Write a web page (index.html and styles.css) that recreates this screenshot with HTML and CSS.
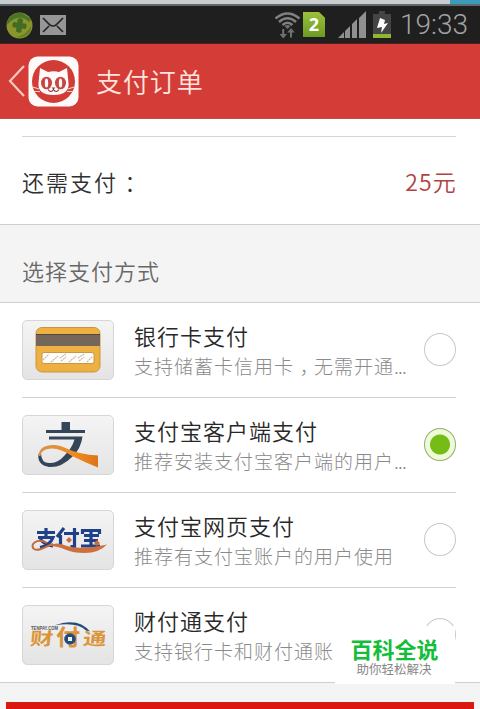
FILE: index.html
```html
<!DOCTYPE html>
<html lang="zh-CN">
<head>
<meta charset="utf-8">
<title>支付订单</title>
<link rel="stylesheet" href="styles.css">
</head>
<body>
<div class="top-strip"><span class="strip-accent"></span></div>
<div class="status-bar">
  <svg class="shield" width="27" height="27" viewBox="0 0 27 27"><circle cx="13.500" cy="13.500" r="13" fill="#8b942c"/><path d="M1 13C1 5 9 0 16 1L25 7l-2 3C17 3 7 5 1 13" fill="#4a7428"/><path d="M25 14c1 8-8 13-15 11 7-1 12-5 15-11" fill="#5a8029"/><path d="M10.500 6.500q3-2 6 0v4h4q2 3 0 6h-4v4q-3 2-6 0v-4h-4q-2-3 0-6h4z" fill="#416c22" transform="rotate(8 13.500 13.500) translate(1.350 1.350) scale(.9)"/></svg>
  <svg class="mail" width="26" height="20" viewBox="0 0 26 20"><path d="M0 0h26v20H0z" fill="#969696"/><path d="M3 3l7 7q3 2 6 0l7-7M3 17l6-6M23 17l-6-6" fill="none" stroke="#262626" stroke-width="1.700"/></svg>
  <span class="spacer"></span>
  <svg class="wifi" width="27" height="28" viewBox="0 0 27 28"><g fill="none" stroke="#808080" stroke-width="2.400"><path d="M1.500 7.500Q13.500-2.500 25.500 7.500M5 11Q13.500 3.500 22 11M8.500 14Q13.500 9.500 18.500 14"/></g><path d="M10.500 15q3-2 6 0l-3 3zM8.200 18h2v5H13l-3.700 4.500L5.500 23h2.700zM16 26.500h2v-5h2.800L17 17l-3.700 4.500H16z" fill="#707070"/></svg>
  <span class="sim">2</span>
  <svg class="signal" width="29" height="28" viewBox="0 0 29 28"><path d="M0 27L6 21v6zM7 20l5-5v12H7zM14 13l5-5v19h-5zM21 7l7-7v27h-7z" fill="#909090"/></svg>
  <svg class="battery" width="18" height="28" viewBox="0 0 18 28"><path d="M6 0h6v3h6v20H0V3h6z" fill="#444"/><path d="M0 23h18v4H0z" fill="#8fb82e"/><path d="M7 7l5 2-1 4 4-1-7 10 1-6-5 1z" fill="#fff"/></svg>
  <span class="clock">19:33</span>
</div>
<header class="title-bar">
  <svg class="back" width="18" height="34" viewBox="0 0 18 34"><path d="M16 2L2 17l14 15" fill="none" stroke="#f6c9c1" stroke-width="2.200"/></svg>
  <svg class="logo" width="51" height="51" viewBox="0 0 51 51"><rect x=".5" y=".5" width="50" height="50" rx="9" fill="#fffafa"/><circle cx="25.500" cy="25.500" r="21.500" fill="#d23c36"/><path d="M12 12l8 4q6-1.500 11 0l8-4 1.500 15q1 12-15 12T10.500 27z" fill="#fffafa"/><ellipse cx="18.500" cy="27" rx="5.500" ry="6.300" fill="#c84440"/><ellipse cx="32.500" cy="27" rx="5.500" ry="6.300" fill="#c84440"/><ellipse cx="18.500" cy="27" rx="1.700" ry="4.500" fill="#fffafa"/><ellipse cx="32.500" cy="27" rx="1.700" ry="4.500" fill="#fffafa"/><path d="M23.500 31.500h4l-2 2z" fill="#81383a"/><path d="M20 33.500q3 4 5.500 0 2.500 4 5.500 0" fill="none" stroke="#81383a" stroke-width="1.200"/><path d="M5 31l6 2M6 35.500h6M46 31l-6 2M45 35.500h-6" stroke="#f3cdc8" stroke-width="1.100"/></svg>
  <h1>支付订单</h1>
</header>
<section class="amount">
  <span>还需支付<span class="punct">：</span></span>
  <span class="price">25元</span>
</section>
<h2 class="section-title">选择支付方式</h2>
<main class="methods">
  <div class="method">
    <span class="tile"><svg width="90" height="58" viewBox="0 0 90 58"><rect x="13" y="6.500" width="64" height="44.500" rx="6" fill="#edb041" stroke="#c99543"/><path d="M13 13.500h64V25H13z" fill="#74675a"/><path d="M13 13.500h64" stroke="#4e4741"/><rect x="19" y="31.500" width="52" height="11" rx="2" fill="#fffdf8" stroke="#c7964b"/><path d="M20 39l6-6M28 41l7-6M37 37l6-4M38 40l5-4M46 41l7-6M55 37l6-4M56 40l5-4M64 41l5-5" stroke="#bbb6ae" stroke-width="1.100" stroke-dasharray="2 .7"/></svg></span>
    <div class="copy"><h3>银行卡支付</h3><p>支持储蓄卡信用卡<span class="punct">，</span>无需开通<span class="dots">...</span></p></div>
    <span class="radio"></span>
  </div>
  <div class="method">
    <span class="tile"><svg width="90" height="58" viewBox="0 0 90 58"><defs><linearGradient id="ribbon" x2="1"><stop stop-color="#d69452"/><stop offset=".6" stop-color="#f08b20"/><stop offset="1" stop-color="#dd7516"/></linearGradient></defs><path d="M38.500 6H47v8h15v3H23v-3h15.500zM26 20.500h33.500Q58 33 49 41 38 52 26 51 14 49 15.500 38l2.500-1q0 11 10 10 7 0 14-8 7-7 9.500-15.500H26z" fill="#34455a"/><path d="M15.500 40C16 29 29 27 40 31q17 8 35 8.500v12Q61 46 49 40 37 32 28 32.500 18 33 17.500 40z" fill="url(#ribbon)"/></svg></span>
    <div class="copy"><h3>支付宝客户端支付</h3><p>推荐安装支付宝客户端的用户<span class="dots">...</span></p></div>
    <span class="radio radio-on"></span>
  </div>
  <div class="method">
    <span class="tile"><svg width="90" height="58" viewBox="0 0 90 58"><g fill="none" stroke="#20408a" stroke-width="3.200"><path d="M14 21.500h18M23 17v9M15 26.500h15q-3 8-13 10M17 28q5 6 13 7M41 17l-7 9M37.500 24v12M41 22.500h15M51.500 17v18.500h-4M59.500 23v-3.500h17V23M61 24.500h15M61 29.500h14M68 20v14M58 35h19"/></g><path d="M46 26l3 3-3 3-3-3zM74 29l3 3-3 3-3-3z" fill="#cf6b3b"/><path d="M24 32C14 26 6 34 11 38c5 3 12-3 19-5" fill="none" stroke="#c56a3d" stroke-width="2"/><path d="M24 35q10-5 20 0Q56 39 84 33.500 76 42 62 42 50 42 42 38.500q-8-4-18-3.500" fill="#cd703f"/></svg></span>
    <div class="copy"><h3>支付宝网页支付</h3><p>推荐有支付宝账户的用户使用</p></div>
    <span class="radio"></span>
  </div>
  <div class="method">
    <span class="tile"><svg width="90" height="58" viewBox="0 0 90 58"><text class="tenpay-url" x="8" y="23.500" textLength="27" lengthAdjust="spacingAndGlyphs">TENPAY.COM</text><path d="M31 19.500q24-9 36 6l-4-1q-9-9-32-5" fill="#264c7c"/><g class="tenpay" fill="#da953a"><text transform="translate(6.500 39) skewX(-6) scale(1.330 1)">财</text><text class="tenpay-mid" transform="translate(33 38.500) scale(1.100 1)">付</text><text transform="translate(59.500 39) skewX(-6) scale(1.330 1)">通</text></g><circle cx="47" cy="33" r="5.800" fill="#244c79"/><path d="M45 31h4v4h-4z" fill="#f3f1ee"/></svg></span>
    <div class="copy"><h3>财付通支付</h3><p>支持银行卡和财付通账</p></div>
    <span class="radio"></span>
    <aside class="watermark"><strong>百科全说</strong><small>助你轻松解决</small></aside>
  </div>
</main>
<footer><div class="pay-edge"></div></footer>
</body>
</html>
```
FILE: styles.css
```css
* { box-sizing: border-box; }
body {
  margin: 0;
  width: 480px;
  height: 709px;
  overflow: hidden;
  display: flex;
  flex-direction: column;
  background: #fff;
  font-family: "Noto Sans CJK SC", sans-serif;
  font-weight: 300;
}
body > * { flex-shrink: 0; }
h1, h2, h3, p { margin: 0; font-weight: 300; white-space: nowrap; }
svg { display: block; flex-shrink: 0; }
.top-strip {
  height: 6px;
  display: flex;
  justify-content: flex-end;
  background: #c9cdd1;
  border-bottom: 2px solid #5e696b;
}
.strip-accent { width: 30px; background: #3c9abb; }
.status-bar {
  height: 38px;
  display: flex;
  align-items: flex-start;
  padding: 5px 13px 0 6px;
  background: #1f1f1f;
  border-bottom: 1px solid #50201c;
}
.shield { margin-top: 1px; }
.mail { margin: 4px 0 0 7px; }
.spacer { flex: 1; }
.sim {
  width: 22px;
  height: 25px;
  margin: 1px 13px 0 2px;
  background: linear-gradient(#9bc13c, #6e9a22);
  clip-path: polygon(0 0, 73% 0, 100% 23%, 100% 100%, 0 100%);
  color: #fff;
  font: bold 18px/25px "Noto Sans", sans-serif;
  text-align: center;
}
.battery { margin: 0 9px 0 6px; }
.clock {
  width: 67px;
  font: 300 28px/28px Roboto, sans-serif;
  color: #a3a3a3;
}
.title-bar {
  height: 75px;
  display: flex;
  align-items: center;
  padding-left: 8px;
  background: #d43d37;
  border-bottom: 1px solid #b8554c;
}
.logo { margin-left: 2px; }
.title-bar h1 {
  margin: -2px 0 0 17px;
  color: #ffe4df;
  font-size: 26px;
  font-weight: 350;
  letter-spacing: .9px;
}
.amount {
  height: 88px;
  margin: 17px 24px 0 22px;
  border-top: 1px solid #d4d4d4;
  display: flex;
  align-items: center;
  justify-content: space-between;
  color: #303030;
  font-size: 22px;
  font-weight: 350;
  letter-spacing: 2px;
}
.punct { display: inline-block; transform: translateX(.3em); }
.price { color: #b0443f; font-size: 23px; letter-spacing: 1.2px; margin-right: -1px; }
.section-title {
  height: 79px;
  padding: 14px 22px 0;
  background: #f4f4f4;
  border-top: 1px solid #cfcfcf;
  border-bottom: 1px solid #cfcfcf;
  color: #686868;
  font-size: 22px;
  font-weight: 350;
  line-height: 62px;
  letter-spacing: 1px;
}
.methods { border-bottom: 1px solid #cfcfcf; }
.method {
  position: relative;
  height: 95px;
  margin: 0 24px 0 22px;
  display: flex;
  align-items: center;
  border-bottom: 1px solid #d2d2d2;
}
.method:last-child { height: 94px; border-bottom: 0; }
.tile {
  width: 92px;
  height: 60px;
  border: 1px solid #d6d6d6;
  border-radius: 5px;
  background: linear-gradient(#f4f4f4, #e5e4e4);
}
.copy { flex: 1; margin: -1px 0 0 20px; }
.copy h3 { color: #282828; font-size: 22px; font-weight: 350; line-height: 31px; letter-spacing: 1px; }
.copy p { color: #8a8a8a; font-size: 19px; line-height: 29px; letter-spacing: 1px; }
.dots { letter-spacing: -.8px; }
.radio {
  width: 32px;
  height: 33px;
  margin-top: -1px;
  border: 1.5px solid #c8c8c8;
  border-radius: 50%;
  background: #fff;
}
.radio-on {
  border-color: #92ad75;
  background: radial-gradient(circle, #75bd16 9.5px, #edfbd7 10.5px);
}
.tenpay { font: 700 17.5px "Noto Sans CJK SC", sans-serif; }
.tenpay-mid { font-size: 22px; }
.tenpay-url { font: 700 5px "Liberation Sans", sans-serif; fill: #555; }
.watermark {
  position: absolute;
  left: 313px;
  top: 38px;
  width: 120px;
  height: 58px;
  padding-top: 8px;
  background: #fff;
  text-align: center;
}
.watermark strong { display: block; margin-left: -1px; color: #14bd3a; font-size: 22px; font-weight: 700; line-height: 28px; }
.watermark small { display: block; margin-left: -2px; color: #858585; font-size: 12.5px; font-weight: 400; line-height: 14px; }
footer { flex: 1; background: #f4f4f4; padding: 19px 6px 0; }
.pay-edge { height: 7px; background: #dc1711; border-top: 1px solid #c9221b; }
```
